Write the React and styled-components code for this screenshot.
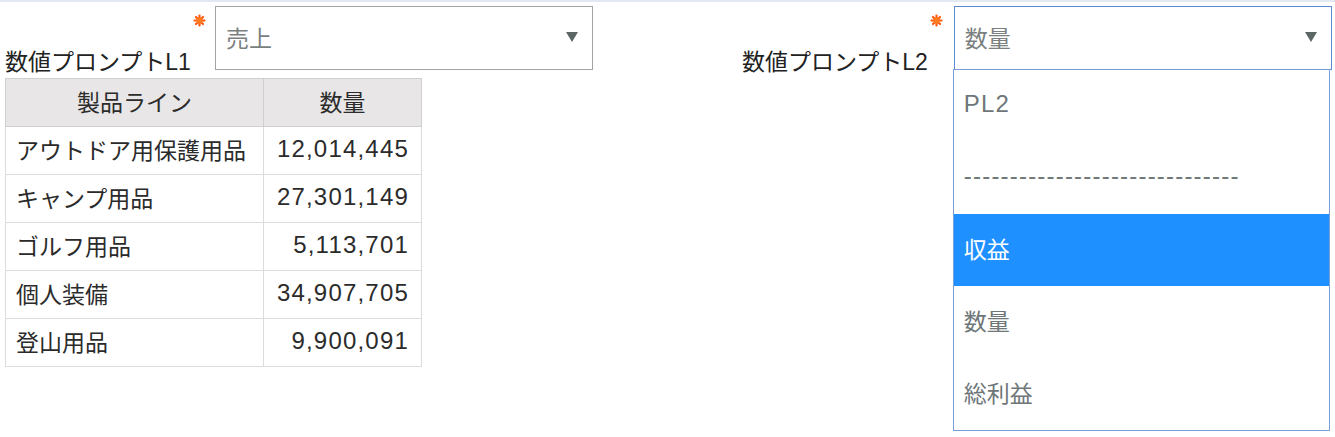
import React from "react";
import styled, { createGlobalStyle } from "styled-components";

const GlobalStyle = createGlobalStyle`
  html, body {
    margin: 0;
    padding: 0;
    background: #fff;
  }
  body {
    font-family: "Liberation Sans", "Noto Sans CJK JP", sans-serif;
    color: #333;
  }
`;

const Page = styled.div`
  width: 1335px;
  height: 437px;
  box-sizing: border-box;
  border-top: 2px solid #e3e9f3;
  padding: 4px 0 0 5px;
  overflow: hidden;
`;

const PromptRow = styled.div`
  display: flex;
  align-items: flex-start;
  gap: 149px;
`;

const Column = styled.div`
  display: flex;
  flex-direction: column;
  align-items: flex-start;
`;

const PromptGroup = styled.div`
  display: flex;
  align-items: flex-end;
`;

const Label = styled.div`
  font-size: 23px;
  line-height: 23px;
  margin-bottom: -4px;
  color: #222;
  white-space: nowrap;
`;

const Required = styled.svg`
  align-self: flex-start;
  width: 13px;
  height: 13px;
  margin: 8px ${(p) => p.gap}px 0 2px;
`;

const SelectWrap = styled.div`
  position: relative;
`;

const SelectBox = styled.div`
  box-sizing: border-box;
  width: 378px;
  height: 64px;
  display: flex;
  align-items: center;
  justify-content: space-between;
  padding: 0 14px 2px 10px;
  border: 1px solid ${(p) => (p.open ? "#5d8ad3" : "#a3a3a3")};
  background: #fff;
  font-size: 23px;
  color: #7a7f80;
`;

const Arrow = styled.span`
  width: 0;
  height: 0;
  border-left: 6px solid transparent;
  border-right: 6px solid transparent;
  border-top: 10px solid #5c6664;
`;

const Dropdown = styled.ul`
  position: absolute;
  top: calc(100% - 1px);
  left: -1px;
  width: 377px;
  box-sizing: border-box;
  margin: 0;
  padding: 0;
  list-style: none;
  border: 1px solid #7a9fd8;
  background: #fff;
  z-index: 2;
`;

const Option = styled.li`
  height: 72px;
  box-sizing: border-box;
  display: flex;
  align-items: center;
  padding: 0 0 4px 10px;
  font-size: ${(p) => (p.latin ? "24px" : "23px")};
  letter-spacing: ${(p) => (p.latin ? "1.2px" : "0")};
  color: ${(p) => (p.active ? "#fff" : "#6e7678")};
  background: ${(p) => (p.active ? "#1e90ff" : "transparent")};
`;

const Table = styled.table`
  margin-top: 8px;
  width: 416px;
  table-layout: fixed;
  border-collapse: collapse;
  font-size: 23px;
  color: #2b2b2b;
`;

const HeadCell = styled.th`
  height: 48px;
  box-sizing: border-box;
  background: #e8e6e6;
  border: 1px solid #cfcfcf;
  font-weight: normal;
  text-align: center;
  padding: 0 0 4px;
`;

const Cell = styled.td`
  height: 48px;
  box-sizing: border-box;
  border: 1px solid #dcdcdc;
  padding: ${(p) => (p.num ? "0 12px 4px 0" : "0 0 4px 10px")};
  text-align: ${(p) => (p.num ? "right" : "left")};
  font-size: ${(p) => (p.num ? "24px" : "23px")};
  letter-spacing: ${(p) => (p.num ? "1.2px" : "0")};
  white-space: nowrap;
`;

const Asterisk = ({ gap }) => (
  <Required viewBox="0 0 13 13" gap={gap}>
    <g stroke="#ff5a10" strokeWidth="2.2" strokeLinecap="round">
      <line x1="6.5" y1="1.5" x2="6.5" y2="11.5" />
      <line x1="1.5" y1="6.5" x2="11.5" y2="6.5" />
      <line x1="3" y1="3" x2="10" y2="10" />
      <line x1="10" y1="3" x2="3" y2="10" />
    </g>
    <circle cx="6.5" cy="6.5" r="3" fill="#ff7a1a" />
  </Required>
);

const rows = [
  ["アウトドア用保護用品", "12,014,445"],
  ["キャンプ用品", "27,301,149"],
  ["ゴルフ用品", "5,113,701"],
  ["個人装備", "34,907,705"],
  ["登山用品", "9,900,091"],
];

const options = [
  { text: "PL2", latin: true },
  { text: "------------------------------", latin: true },
  { text: "収益", active: true },
  { text: "数量" },
  { text: "総利益" },
];

export default function App() {
  return (
    <Page>
      <GlobalStyle />
      <PromptRow>
        <Column>
          <PromptGroup>
            <Label>数値プロンプトL1</Label>
            <Asterisk gap={9} />
            <SelectWrap>
              <SelectBox>
                <span>売上</span>
                <Arrow />
              </SelectBox>
            </SelectWrap>
          </PromptGroup>
          <Table>
            <colgroup>
              <col style={{ width: 258 }} />
              <col style={{ width: 158 }} />
            </colgroup>
            <thead>
              <tr>
                <HeadCell>製品ライン</HeadCell>
                <HeadCell>数量</HeadCell>
              </tr>
            </thead>
            <tbody>
              {rows.map(([name, qty]) => (
                <tr key={name}>
                  <Cell>{name}</Cell>
                  <Cell num>{qty}</Cell>
                </tr>
              ))}
            </tbody>
          </Table>
        </Column>
        <PromptGroup>
          <Label>数値プロンプトL2</Label>
          <Asterisk gap={11} />
          <SelectWrap>
            <SelectBox open>
              <span>数量</span>
              <Arrow />
            </SelectBox>
            <Dropdown>
              {options.map((o, i) => (
                <Option key={i} latin={o.latin} active={o.active}>
                  {o.text}
                </Option>
              ))}
            </Dropdown>
          </SelectWrap>
        </PromptGroup>
      </PromptRow>
    </Page>
  );
}
